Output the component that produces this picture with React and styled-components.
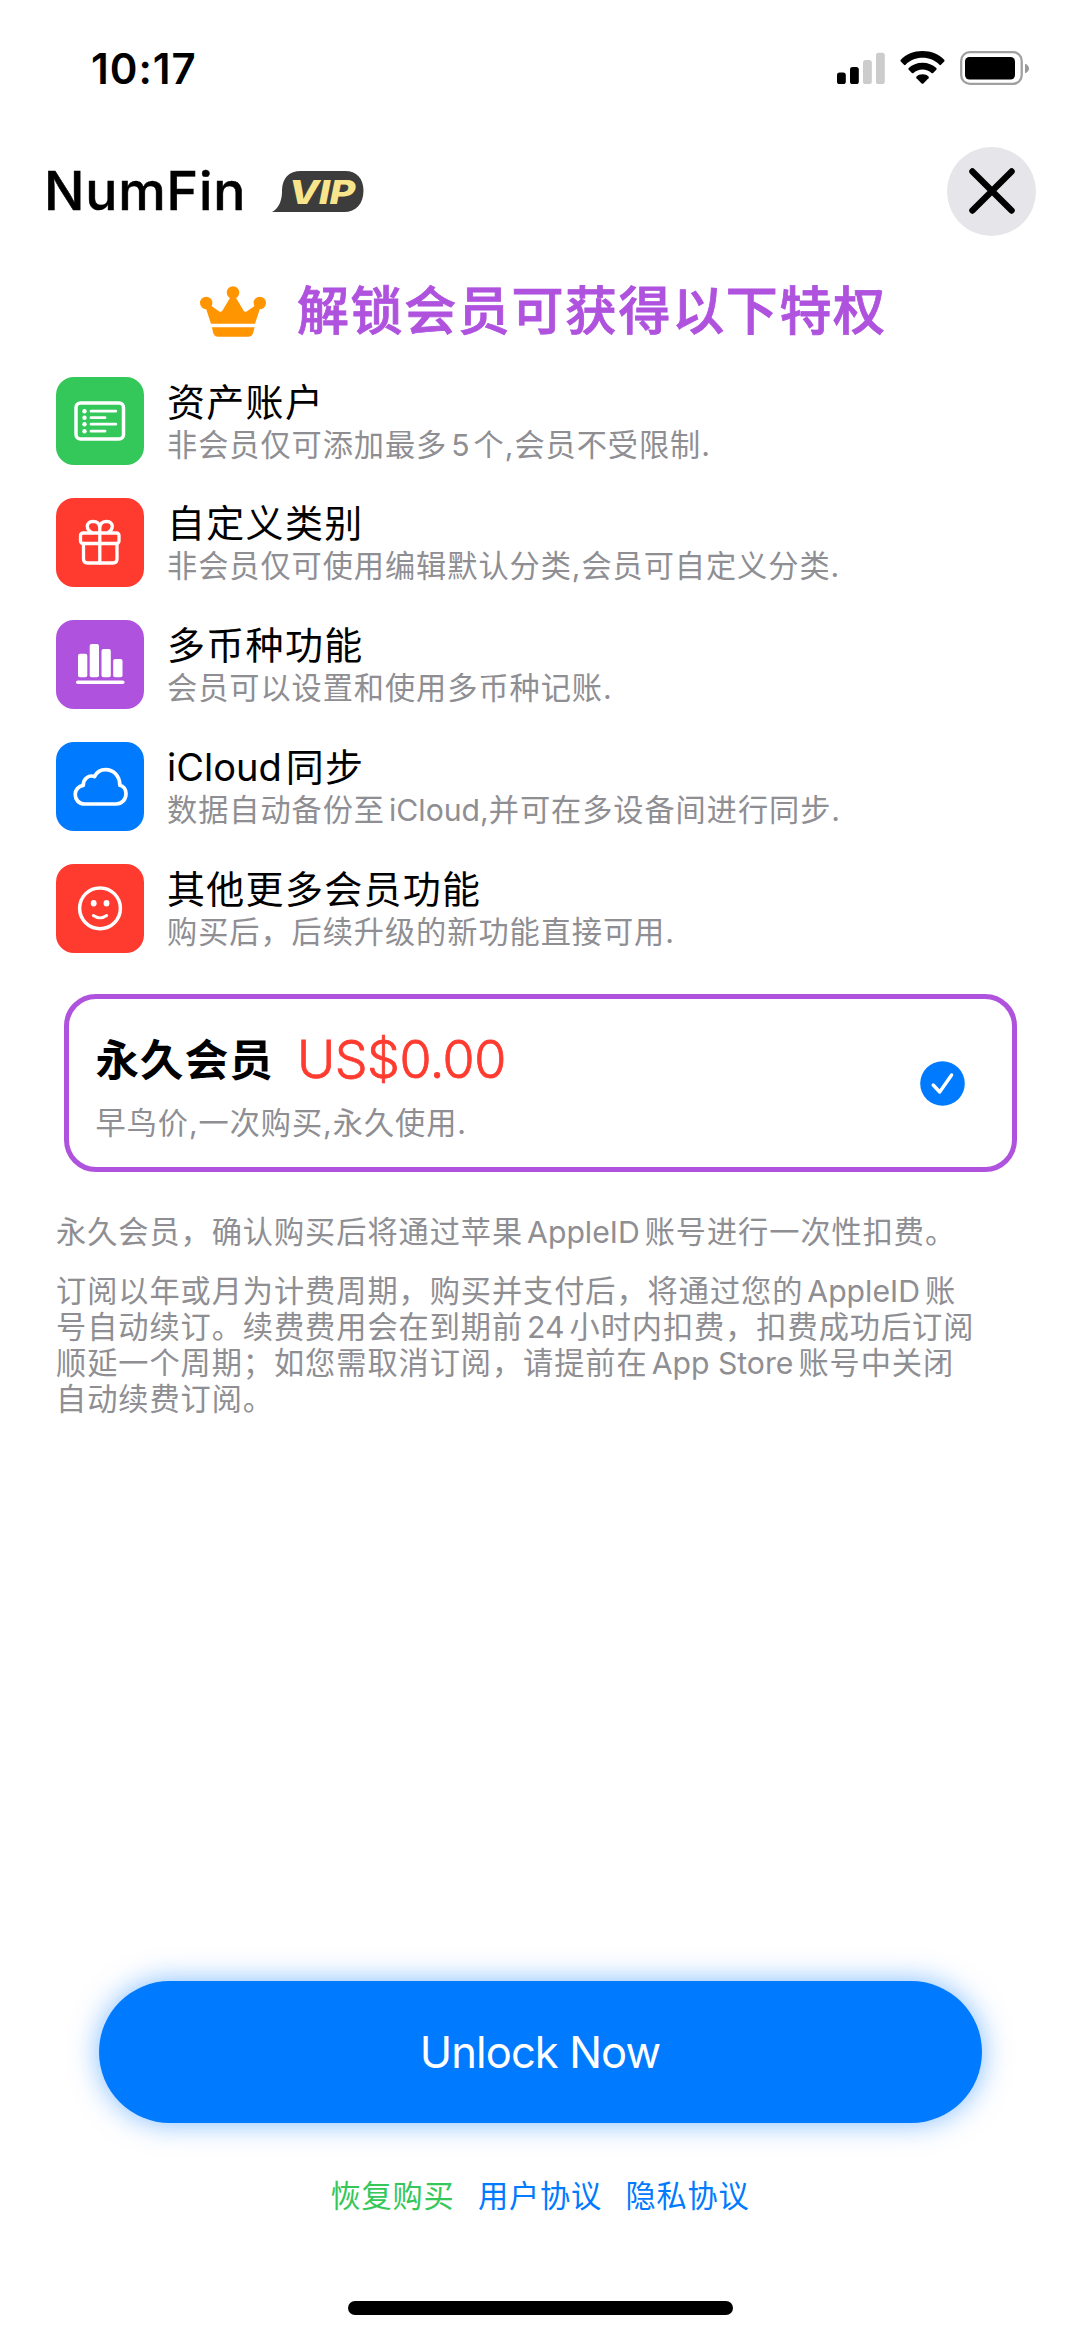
import React from "react";
import styled, { createGlobalStyle } from "styled-components";

const GlobalStyle = createGlobalStyle`
  *, *::before, *::after { box-sizing: border-box; }
  html, body { margin: 0; padding: 0; background: #fff; }
  body {
    font-family: Inter, "Noto Sans CJK SC", sans-serif;
    text-autospace: no-autospace;
    text-spacing-trim: space-all;
    -webkit-font-smoothing: antialiased;
  }
  p, h1, h2, h3 { margin: 0; font-weight: 400; }
  button { font: inherit; border: 0; padding: 0; }
  svg { display: block; flex: none; }
`;

const Screen = styled.main`
  width: 1080px;
  height: 2337px;
  display: flex;
  flex-direction: column;
  background: #fff;
  color: #000;
  overflow: hidden;
`;

const StatusBar = styled.div`
  height: 140px;
  padding: 43px 50px 0 91px;
  display: flex;
  align-items: flex-start;
  justify-content: space-between;
`;

const Clock = styled.span`
  font-size: 42px;
  line-height: 52px;
  font-weight: 600;
  letter-spacing: 1px;
`;

const StatusIcons = styled.div`
  display: flex;
  align-items: flex-start;
  padding-top: 8px;
  gap: 15px;
`;

const Header = styled.header`
  height: 102px;
  padding: 0 44px 0 44px;
  display: flex;
  align-items: center;
  justify-content: space-between;
`;

const Brand = styled.div`
  display: flex;
  align-items: center;
  gap: 26px;
`;

const BrandName = styled.h1`
  font-size: 53.5px;
  line-height: 64px;
  font-weight: 500;
  letter-spacing: 0.8px;
  -webkit-text-stroke: 0.5px #000;
`;

const VipBadge = styled.span`
  position: relative;
  width: 92px;
  height: 41px;
  display: flex;
`;

const VipShape = styled.svg`
  position: absolute;
  inset: 0;
`;

const VipText = styled.span`
  position: relative;
  padding-left: 14px;
  font-size: 33px;
  line-height: 43px;
  font-style: italic;
  font-weight: 800;
  letter-spacing: -0.5px;
  color: #f8e58b;
  transform: scaleX(1.2);
  transform-origin: left center;
`;

const CloseButton = styled.button`
  width: 89px;
  height: 89px;
  border-radius: 50%;
  background: #e5e5ea;
  display: grid;
  place-items: center;
`;

const Headline = styled.div`
  height: 134.5px;
  padding: 44px 0 0 200px;
  display: flex;
  align-items: flex-start;
  gap: 31px;
`;

const HeadlineText = styled.h2`
  font-size: 52px;
  line-height: 52px;
  font-weight: 500;
  letter-spacing: 1.6px;
  color: #af52de;
  -webkit-text-stroke: 0.8px #af52de;
`;

const FeatureList = styled.section`
  display: flex;
  flex-direction: column;
  gap: 33.4px;
  padding-left: 55.5px;
`;

const FeatureRow = styled.div`
  display: flex;
  height: 88.5px;
  gap: 23px;
`;

const Tile = styled.div`
  width: 88.5px;
  height: 88.5px;
  border-radius: 18px;
  background: ${(p) => p.$color};
`;

const FeatureText = styled.div`
  display: flex;
  flex-direction: column;
  gap: 3px;
  padding-top: 3px;
`;

const FeatureTitle = styled.h3`
  font-size: 38px;
  line-height: 44px;
  letter-spacing: 1.3px;
  white-space: nowrap;
`;

const Note = styled.p`
  font-size: 30.2px;
  line-height: 36px;
  letter-spacing: 0.95px;
  color: #8e8e93;
  white-space: nowrap;
`;

const Latin = styled.span`
  margin-left: ${(p) => p.$before || 0}px;
  margin-right: ${(p) => p.$after || 0}px;
  letter-spacing: 0;
`;

const PlanCard = styled.section`
  margin: 41.5px 63px 0 64px;
  height: 178px;
  border: 5.5px solid #af52de;
  border-radius: 32px;
  padding: 0 47px 0 26.5px;
  display: flex;
  align-items: center;
  justify-content: space-between;
`;

const PlanInfo = styled.div`
  display: flex;
  flex-direction: column;
  gap: 15px;
  padding-top: 5px;
`;

const PlanLine = styled.div`
  display: flex;
  align-items: center;
  gap: 23px;
  height: 60px;
`;

const PlanName = styled.h2`
  font-size: 43.5px;
  line-height: 60px;
  font-weight: 700;
  letter-spacing: 1.1px;
`;

const Price = styled.span`
  font-size: 52px;
  line-height: 60px;
  font-weight: 300;
  letter-spacing: -0.5px;
  color: #ff3b30;
  -webkit-text-stroke: 0.8px #ff3b30;
`;

const Terms = styled.section`
  padding: 41.5px 0 0 56px;
  display: flex;
  flex-direction: column;
  gap: 23px;
`;

const Footer = styled.footer`
  margin-top: auto;
  height: 356px;
  display: flex;
  flex-direction: column;
  align-items: center;
`;

const UnlockButton = styled.button`
  width: 883px;
  height: 142px;
  border-radius: 71px;
  background: #007aff;
  color: #fff;
  font-size: 43.5px;
  line-height: 142px;
  font-weight: 400;
  letter-spacing: -0.9px;
  box-shadow: 0 0 29px rgba(0, 122, 255, 0.5);
`;

const Links = styled.nav`
  margin-top: 55px;
  display: flex;
  gap: 23.5px;
`;

const TextLink = styled.a`
  font-size: 30.2px;
  line-height: 36px;
  letter-spacing: 0.8px;
  color: ${(p) => p.$color};
`;

const HomeIndicator = styled.div`
  width: 385px;
  height: 14px;
  margin-top: auto;
  margin-bottom: 22px;
  border-radius: 7px;
  background: #000;
`;

const SignalIcon = () => (
  <svg width="48" height="34" viewBox="0 0 48 34">
    <rect x="0" y="21.5" width="8.8" height="11.5" rx="2.6" />
    <rect x="13" y="16" width="8.8" height="17" rx="2.6" />
    <rect x="26" y="9" width="8.8" height="24" rx="2.6" fill="#ccc" />
    <rect x="39" y="1.7" width="8.8" height="31.3" rx="2.6" fill="#ccc" />
  </svg>
);

const WifiIcon = () => (
  <svg width="45" height="34" viewBox="0 0 45 34">
    <path d="M22.5 0C31.2 0 38.900 3.300 44.200 8.700Q45 9.600 44.200 10.500L41 13.800Q40.200 14.500 39.400 13.700C35 9.400 29 6.800 22.500 6.800S10 9.400 5.600 13.700Q4.800 14.500 4 13.800L.8 10.500Q0 9.600.8 8.700C6.100 3.300 13.800 0 22.500 0Z" />
    <path d="M22.500 11.700C28 11.700 32.800 13.700 36.300 17.100Q37.100 18 36.300 18.800L33.100 22Q32.300 22.700 31.500 22C29.200 19.800 26 18.500 22.500 18.500S15.800 19.800 13.500 22Q12.700 22.700 11.900 22L8.700 18.800Q7.900 18 8.700 17.100C12.200 13.700 17 11.700 22.500 11.700Z" />
    <path d="M22.500 23.300C25 23.300 27 24.100 28.500 25.500Q29.300 26.300 28.500 27.200L23.400 32.400Q22.500 33.200 21.600 32.400L16.500 27.200Q15.700 26.300 16.500 25.500C18 24.100 20 23.300 22.500 23.300Z" />
  </svg>
);

const BatteryIcon = () => (
  <svg width="70" height="34" viewBox="0 0 70 34">
    <rect x="1.200" y="1.200" width="60.500" height="31.600" rx="8.500" fill="none" stroke="#a0a0a0" strokeWidth="2.300" />
    <rect x="5" y="6" width="50" height="22.500" rx="4.500" />
    <path d="M65 12.700C70.300 14.500 70.300 20.500 65 22.300Z" fill="#999" />
  </svg>
);

const CrownIcon = () => (
  <svg width="66" height="51" viewBox="0 0 66 51" fill="#ff9500">
    <circle cx="33" cy="6.500" r="6.300" />
    <circle cx="6.200" cy="17" r="6.200" />
    <circle cx="59.800" cy="17" r="6.200" />
    <path d="M30.500 11H35.500L43.500 24.500Q45 26.500 47 25.200L56 19L60 22.500L55 37.700H11L6 22.500L10 19L19 25.200Q21 26.500 22.500 24.500Z" />
    <path d="M11.900 41.300H54.500L53.300 46.600Q52.200 50.800 48 50.800H18.400Q14.200 50.800 13.100 46.600Z" />
  </svg>
);

const lineProps = { fill: "none", stroke: "#fff", strokeWidth: 3.5, strokeLinecap: "round", strokeLinejoin: "round" };

const ListIcon = () => (
  <svg width="88" height="88" viewBox="0 0 88 88" {...lineProps}>
    <rect x="20" y="26" width="47.500" height="36" rx="4.500" />
    <g strokeWidth="2.800">
      <path d="M35 34.200H59.800M35 40.700H49M35 47.200H59.800M35 54.200H49" />
    </g>
    <g fill="#fff" stroke="none">
      <circle cx="28.500" cy="34.200" r="2.200" />
      <circle cx="28.500" cy="40.700" r="2.200" />
      <circle cx="28.500" cy="47.200" r="2.200" />
      <circle cx="28.500" cy="54.200" r="2.200" />
    </g>
  </svg>
);

const GiftIcon = () => (
  <svg width="88" height="88" viewBox="0 0 88 88" {...lineProps} strokeWidth={3.300}>
    <rect x="24.500" y="35" width="38.500" height="10.500" rx="2.500" />
    <path d="M27.500 45.500V61Q27.500 65 31.500 65H57Q61 65 61 61V45.500" />
    <path d="M43.800 34V65" />
    <path d="M43.800 34.500V29.500Q43.300 23.300 37 23.300Q31.500 23.600 31.300 28.500Q31.500 32.500 35.500 34.500M43.800 29.500Q44.300 23.300 50.600 23.300Q56.100 23.600 56.300 28.500Q56.100 32.500 52.100 34.500" />
  </svg>
);

const BarsIcon = () => (
  <svg width="88" height="88" viewBox="0 0 88 88" fill="#fff">
    <rect x="22" y="33.800" width="9.300" height="23.500" rx="2" />
    <rect x="33.700" y="24" width="9.300" height="33.300" rx="2" />
    <rect x="45.500" y="29" width="9.300" height="28.300" rx="2" />
    <rect x="57.200" y="39" width="9.300" height="18.300" rx="2" />
    <rect x="20" y="60.500" width="48.500" height="3.600" rx="1.800" />
  </svg>
);

const CloudIcon = () => (
  <svg width="88" height="88" viewBox="0 0 88 88" {...lineProps} strokeWidth={3.700}>
    <path d="M28.500 62C22.800 62 19.200 57.500 19.200 52.500C19.200 48 22.500 44 27.300 43.300C27 37.500 32.500 32.300 38.500 34.600C40.800 30 44.800 27.700 49.500 27.700C57.500 27.700 64 34 63.800 43.200C67.500 44 70 47.500 70 51.700C70 57.500 65.800 62 60 62Z" />
  </svg>
);

const SmileIcon = () => (
  <svg width="88" height="88" viewBox="0 0 88 88" {...lineProps}>
    <circle cx="44" cy="44.300" r="20.400" />
    <path d="M37.300 51.500Q44 56.300 50.700 51.500" strokeWidth="2.800" />
    <g fill="#fff" stroke="none">
      <ellipse cx="37.700" cy="39.300" rx="2.900" ry="3.200" />
      <ellipse cx="50.500" cy="39.300" rx="2.900" ry="3.200" />
    </g>
  </svg>
);

const CheckIcon = () => (
  <svg width="45" height="45" viewBox="0 0 45 45" fill="none">
    <circle cx="22.500" cy="22.500" r="22.300" fill="#007aff" />
    <path d="M13.200 24L19.700 31L31.600 14" stroke="#fff" strokeWidth="3.400" strokeLinecap="round" strokeLinejoin="round" />
  </svg>
);

const features = [
  { color: "#34c759", Icon: ListIcon, title: "资产账户", note: <>非会员仅可添加最多<Latin $before={4} $after={4}>5</Latin>个,会员不受限制.</> },
  { color: "#ff3b30", Icon: GiftIcon, title: "自定义类别", note: "非会员仅可使用编辑默认分类,会员可自定义分类." },
  { color: "#af52de", Icon: BarsIcon, title: "多币种功能", note: "会员可以设置和使用多币种记账." },
  { color: "#007aff", Icon: CloudIcon, title: <><Latin $after={4}>iCloud</Latin>同步</>, note: <>数据自动备份至<Latin $before={4}>iCloud,</Latin>并可在多设备间进行同步.</> },
  { color: "#ff3b30", Icon: SmileIcon, title: "其他更多会员功能", note: "购买后，后续升级的新功能直接可用." },
];

export default function App() {
  return (
    <>
      <GlobalStyle />
      <Screen lang="zh-CN">
        <StatusBar>
          <Clock>10:17</Clock>
          <StatusIcons>
            <SignalIcon />
            <WifiIcon />
            <BatteryIcon />
          </StatusIcons>
        </StatusBar>

        <Header>
          <Brand>
            <BrandName>NumFin</BrandName>
            <VipBadge>
              <VipShape width="92" height="41" viewBox="0 0 92 41">
                <path d="M0 41C6 38 9.500 31 10 22V19C10.500 7 17 0 29 0H73C84.500 0 91.500 7.500 91.500 19.500C91.500 33 84 41 72 41Z" fill="#3c3c3c" />
              </VipShape>
              <VipText>VIP</VipText>
            </VipBadge>
          </Brand>
          <CloseButton aria-label="关闭">
            <svg width="46" height="46" viewBox="0 0 46 46">
              <path d="M3.400 3.400L42.600 42.600M42.600 3.400L3.400 42.600" stroke="#000" strokeWidth="6.300" strokeLinecap="round" />
            </svg>
          </CloseButton>
        </Header>

        <Headline>
          <CrownIcon />
          <HeadlineText>解锁会员可获得以下特权</HeadlineText>
        </Headline>

        <FeatureList>
          {features.map(({ color, Icon, title, note }, i) => (
            <FeatureRow key={i}>
              <Tile $color={color}><Icon /></Tile>
              <FeatureText>
                <FeatureTitle>{title}</FeatureTitle>
                <Note>{note}</Note>
              </FeatureText>
            </FeatureRow>
          ))}
        </FeatureList>

        <PlanCard>
          <PlanInfo>
            <PlanLine>
              <PlanName>永久会员</PlanName>
              <Price>US$0.00</Price>
            </PlanLine>
            <Note>早鸟价,一次购买,永久使用.</Note>
          </PlanInfo>
          <CheckIcon />
        </PlanCard>

        <Terms>
          <Note>永久会员，确认购买后将通过苹果<Latin $before={4} $after={5}>AppleID</Latin>账号进行一次性扣费。</Note>
          <Note>
            订阅以年或月为计费周期，购买并支付后，将通过您的<Latin $before={4} $after={5}>AppleID</Latin>账<br />
            号自动续订。续费费用会在到期前<Latin $before={4} $after={5}>24</Latin>小时内扣费，扣费成功后订阅<br />
            顺延一个周期；如您需取消订阅，请提前在<Latin $before={4} $after={5}>App Store</Latin>账号中关闭<br />
            自动续费订阅。
          </Note>
        </Terms>

        <Footer>
          <UnlockButton>Unlock Now</UnlockButton>
          <Links>
            <TextLink $color="#34c759">恢复购买</TextLink>
            <TextLink $color="#007aff">用户协议</TextLink>
            <TextLink $color="#007aff">隐私协议</TextLink>
          </Links>
          <HomeIndicator />
        </Footer>
      </Screen>
    </>
  );
}
